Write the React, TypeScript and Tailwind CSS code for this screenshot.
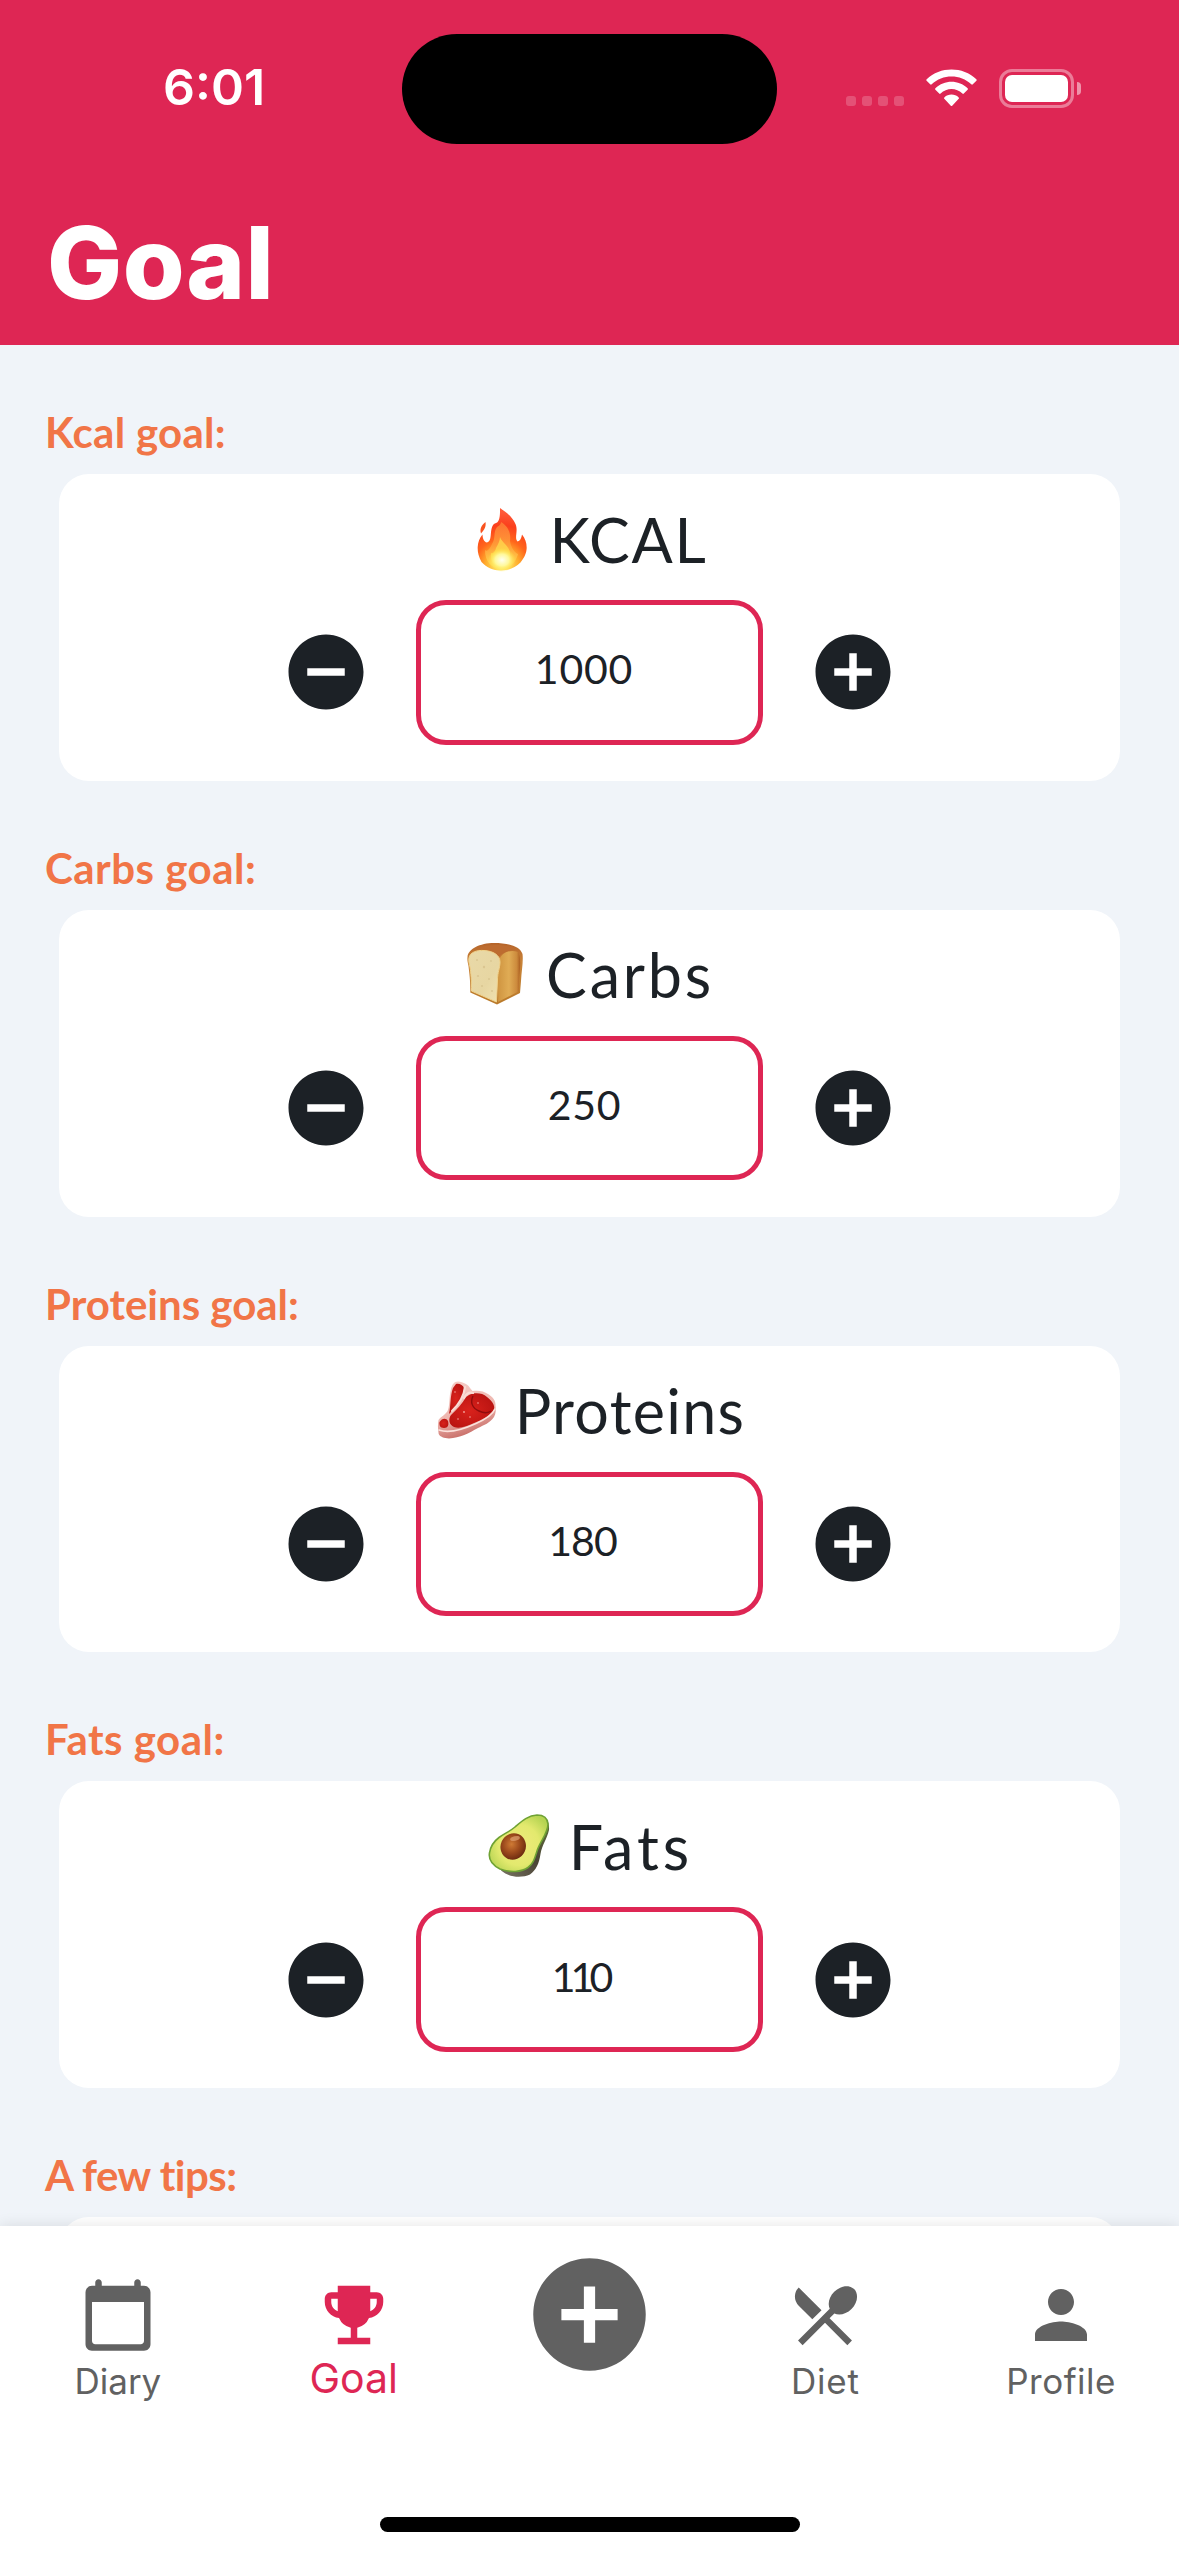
import type { ReactNode } from 'react';
import { MdAddCircle, MdEmojiEvents, MdPerson, MdRemoveCircle, MdRestaurantMenu } from 'react-icons/md';

function Flame() {
  return (
    <svg viewBox="0 0 66 66" className="size-[66px] shrink-0" aria-hidden="true">
      <defs>
        <radialGradient id="flameOuter" gradientUnits="userSpaceOnUse" cx="33" cy="60" r="54">
          <stop offset="0" stopColor="#fff27a" />
          <stop offset="0.3" stopColor="#ffb02e" />
          <stop offset="0.5" stopColor="#ff661c" />
          <stop offset="0.75" stopColor="#fb3f1c" />
          <stop offset="1" stopColor="#ff5a3a" />
        </radialGradient>
        <linearGradient id="flameMid" x1="0" y1="0" x2="0" y2="1">
          <stop offset="0" stopColor="#ff8238" />
          <stop offset="0.5" stopColor="#ffa03c" />
          <stop offset="1" stopColor="#ffe457" />
        </linearGradient>
        <radialGradient id="flameCore">
          <stop offset="0" stopColor="#fffff0" />
          <stop offset="0.5" stopColor="#fff89a" />
          <stop offset="1" stopColor="#ffe83c" stopOpacity="0" />
        </radialGradient>
      </defs>
      <path
        d="M31 2C36 5.500 43 10 46.500 18C49.500 25 45 32 48.500 35.500C51 35 52.500 32 53 28.500C56.500 33 58 38 57.600 43C57 49 54.500 52.500 51.500 56.500C46 62 39 64.500 32 64.500C24 64.500 17 61 12.500 56C9.500 50 8.500 46 8.700 41C9 36 10.500 32 13.500 28.500C13.500 32 15 36 18 36.500C24 35 20 24 24.500 18.500C27 16 31.500 19 31 2Z"
        fill="url(#flameOuter)"
      />
      <path d="M16.500 16C17.500 22 14 25 12 27.500C10.500 23 12.500 19 16.500 16Z" fill="#f9531f" />
      <path
        d="M32 16C40 21 42 28 41 35C42 42 46 47 49 48C47 56 41 62.500 32 62.500C22 62.500 16 55 16 44C18 46 21 43 23 38C27 32 24 26 28 21C31 19 32 18 32 16Z"
        fill="url(#flameMid)"
        opacity="0.8"
      />
      <path d="M31 31C33 37 41 40 41 48C41 57 38 61 32 61C25 61 21 55 22 47C24 48 26 46 27 42C29 38 31 35 31 31Z" fill="#ffdf50" opacity="0.7" />
      <ellipse cx="33" cy="54" rx="14" ry="12" fill="url(#flameCore)" />
    </svg>
  );
}

function Bread() {
  return (
    <svg viewBox="0 0 66 66" className="size-[66px] shrink-0" aria-hidden="true">
      <defs>
        <linearGradient id="crust" x1="0" y1="0" x2="0" y2="1">
          <stop offset="0" stopColor="#b5642a" />
          <stop offset="0.3" stopColor="#c98338" />
          <stop offset="1" stopColor="#b97a2a" />
        </linearGradient>
        <linearGradient id="breadSide" x1="0" y1="0" x2="1" y2="0">
          <stop offset="0" stopColor="#cf9440" />
          <stop offset="0.5" stopColor="#e0ac55" />
          <stop offset="0.85" stopColor="#cc8a3c" />
          <stop offset="1" stopColor="#aa5d20" />
        </linearGradient>
        <linearGradient id="crumb" x1="0" y1="0" x2="1" y2="1">
          <stop offset="0" stopColor="#e9d9a8" />
          <stop offset="0.6" stopColor="#e7d6a2" />
          <stop offset="1" stopColor="#f1e2b0" />
        </linearGradient>
      </defs>
      <path
        d="M5.500 16C6 8 18 2 32 2C46 2 58 5 60.500 13C61.500 20 59.500 30 59 40L58 52L35 63.500L8.300 51.500C8.500 40 7.500 34 6.500 25C5.500 21 5.200 19 5.500 16Z"
        fill="url(#crust)"
      />
      <path d="M37 20C39 11 49 8 56 11C60 17 57.500 30 57 40L56.500 50.500L36 61C37 48 34 38 37 28Z" fill="url(#breadSide)" />
      <path d="M14 8C23 2.500 46 2.500 54 8C47 9 40 12 37 16C31 10 23 8 14 8Z" fill="#bd6c30" />
      <path
        d="M7 17C8 11 15 9 22 9.500C31 10 38 14 38 21C38 27 35.500 31 35.500 39L34.500 61L9.500 50C9.500 40 9 32 8 26C7 22 6.500 20 7 17Z"
        fill="url(#crumb)"
        stroke="#f0d28c"
        strokeWidth="1"
      />
      <g fill="#d5c08a" opacity="0.7">
        <circle cx="15" cy="19" r="1" />
        <circle cx="22" cy="26" r="1.200" />
        <circle cx="29" cy="20" r="0.900" />
        <circle cx="16" cy="35" r="1.100" />
        <circle cx="27" cy="38" r="1" />
        <circle cx="20" cy="45" r="1" />
        <circle cx="30" cy="50" r="1" />
      </g>
    </svg>
  );
}

function Steak() {
  return (
    <svg viewBox="0 0 66 66" className="size-[66px] shrink-0" aria-hidden="true">
      <defs>
        <linearGradient id="fat" x1="0" y1="0" x2="0.300" y2="1">
          <stop offset="0" stopColor="#f6cfc8" />
          <stop offset="0.65" stopColor="#eeb5ae" />
          <stop offset="1" stopColor="#c9706a" />
        </linearGradient>
        <radialGradient id="meat" cx="0.450" cy="0.500" r="0.700">
          <stop offset="0" stopColor="#d9221c" />
          <stop offset="1" stopColor="#b3110f" />
        </radialGradient>
      </defs>
      <path
        d="M24 4.500C29 5 35 8 36 11L38.500 14C44 13 50 14 54 17C59 20 62 24 61.500 29C62 33 62 36 60 40C56 46 50 48 44 51C35 56 26 61 15 61.500C10 61 6 60 4.700 57C4 52 3.500 47 4.500 43C7 39 12 38 14 33C16 27 15 19 17 12C18 8 20 4.500 24 4.500Z"
        fill="url(#fat)"
      />
      <path d="M22 7C25 6 29 8 30 11C30 18 26 27 15 37C17 28 16 19 19 11Z" fill="url(#meat)" />
      <path d="M35 18C40 15.500 48 15.500 53 20C58 24 61 28 60 32C57 38 48 43 40 46C33 49 26 52 20 50C15 48 14 42 17 38C23 32 28 27 32 20Z" fill="url(#meat)" />
      <path d="M5.500 45C8 41 12 40.500 14 44C15 48 14 51 10 51C6 51 5 48 5.500 45Z" fill="url(#meat)" />
      <path d="M31 10C30 19 25 27 18 34M30 21C32 17 35 15 39 16" fill="none" stroke="#f9dcd5" strokeWidth="2.200" strokeLinecap="round" />
      <path d="M39 19C36 25 38 31 45 34C49 36 54 36 57 34" fill="none" stroke="#8f0d0d" strokeWidth="1.400" />
      <path d="M5 53C16 57 30 52 42 46.500C50 43 58 39 61 32" fill="none" stroke="#fbe2dc" strokeWidth="1.600" strokeLinecap="round" />
      <g fill="#f3a39b">
        <circle cx="21" cy="15" r="0.800" />
        <circle cx="30" cy="35" r="0.900" />
        <circle cx="24" cy="42" r="0.800" />
        <circle cx="44" cy="26" r="0.800" />
        <circle cx="36" cy="40" r="0.800" />
      </g>
    </svg>
  );
}

function Avocado() {
  return (
    <svg viewBox="0 0 66 66" className="size-[66px] shrink-0" aria-hidden="true">
      <defs>
        <linearGradient id="peel" x1="0.200" y1="1" x2="1" y2="0.200">
          <stop offset="0" stopColor="#6f6a5a" />
          <stop offset="0.500" stopColor="#4a4435" />
          <stop offset="1" stopColor="#5c6a3a" />
        </linearGradient>
        <radialGradient id="flesh" gradientUnits="userSpaceOnUse" cx="33" cy="32" r="34">
          <stop offset="0" stopColor="#f0ea7c" />
          <stop offset="0.600" stopColor="#e3e96e" />
          <stop offset="1" stopColor="#b6d452" />
        </radialGradient>
        <radialGradient id="pit" cx="0.400" cy="0.450" r="0.600">
          <stop offset="0" stopColor="#cf7a34" />
          <stop offset="0.550" stopColor="#9c4a1c" />
          <stop offset="1" stopColor="#6e2c10" />
        </radialGradient>
      </defs>
      <path d="M56 4C61 5 63.500 9 63 17C61 26 56 32 54.500 41C53 51 50 57 44 61.500C36 65 24 65 15 57.500Z" fill="url(#peel)" />
      <path
        d="M51 2C57 2 61.500 5 62 11C62 20 55 27 51.500 36.500C49 44 48 50 42 54.500C36 59 24 60 14 56C6 52 2.500 46 3.500 40C4.500 33 7 29 13 24.500C19 20 23 19 29 14C36 8 42 2.500 51 2Z"
        fill="url(#flesh)"
        stroke="#6fa234"
        strokeWidth="1.600"
      />
      <ellipse cx="27.200" cy="33.500" rx="12.600" ry="13.400" transform="rotate(25 27.200 33.500)" fill="url(#pit)" />
      <ellipse cx="29" cy="25.500" rx="5" ry="2.200" transform="rotate(-15 29 25.500)" fill="#e0a173" opacity="0.700" />
    </svg>
  );
}

function CalendarIcon() {
  return (
    <svg viewBox="0 0 24 24" className="size-[78px]" fill="currentColor" aria-hidden="true">
      <path
        fillRule="evenodd"
        d="M6 1c.55 0 1 .45 1 1v1h10V2c0-.55.45-1 1-1s1 .45 1 1v1h1c1.100 0 2 .9 2 2v16c0 1.100-.9 2-2 2H4c-1.100 0-2-.9-2-2V5c0-1.100.9-2 2-2h1V2c0-.55.45-1 1-1zM4 8v12c0 .55.45 1 1 1h14c.55 0 1-.45 1-1V8z"
      />
    </svg>
  );
}

function StatusBar() {
  return (
    <div className="relative flex h-[177px] items-center justify-between pr-[98px] pl-[163px]">
      <span className="-mt-1 font-[Inter] text-[50px] leading-[60px] font-semibold">6:01</span>
      <div className="absolute top-[33.5px] left-[402px] h-[110.500px] w-[375px] rounded-full bg-black" />
      <div className="-mt-px flex items-center">
        <div className="mt-[26px] mr-[22px] flex gap-1.5">
          {[0, 1, 2, 3].map((dot) => (
            <span key={dot} className="size-2.5 rounded-[3px] bg-white/20" />
          ))}
        </div>
        <svg viewBox="0 0 51 38" className="mr-[22px] h-[38px] w-[51px]" fill="white" aria-hidden="true">
          <path d="M.7 10.200C14 -2.700 37 -2.700 50.300 10.200c.6.600.6 1 .1 1.500l-3.600 3.600c-.5.500-1 .5-1.500 0C34.500 4.900 16.500 4.900 5.700 15.300c-.5.500-1 .5-1.500 0L.6 11.700c-.5-.5-.5-.9.100-1.500z" />
          <path d="M9.400 19.300c8.800-8.800 23.400-8.800 32.200 0 .5.500.5.900 0 1.400l-3.800 3.800c-.5.500-.9.500-1.400 0-6-6-15.800-6-21.800 0-.5.500-.9.500-1.400 0l-3.800-3.800c-.5-.5-.5-.9 0-1.400z" />
          <path d="M18.300 28.400c4-3.800 10.400-3.800 14.400 0 .5.500.5.900 0 1.400l-6.500 6.900c-.5.500-.9.500-1.400 0l-6.500-6.900c-.5-.5-.5-.9 0-1.400z" />
        </svg>
        <div className="h-[39px] w-[75px] rounded-[13px] border-[3px] border-white/40 p-[3px]">
          <div className="h-[27px] w-[63px] rounded-[7px] bg-white" />
        </div>
        <div className="ml-[3px] h-[13px] w-1 rounded-r-full bg-white/50" />
      </div>
    </div>
  );
}

type Goal = {
  label: string;
  labelClass: string;
  name: string;
  nameClass: string;
  value: string;
  valueClass: string;
  emoji: ReactNode;
};

const goals: Goal[] = [
  { label: 'Kcal goal:', labelClass: 'tracking-[0.3px]', name: 'KCAL', nameClass: 'ml-[15px] mr-[3px] tracking-[1.7px]', value: '1000', valueClass: 'mr-[11px] tracking-[0.8px]', emoji: <Flame /> },
  { label: 'Carbs goal:', labelClass: 'tracking-[0.5px]', name: 'Carbs', nameClass: 'ml-[18px] mr-[3px] tracking-[2.8px]', value: '250', valueClass: 'mr-[10px] tracking-[0.7px]', emoji: <Bread /> },
  { label: 'Proteins goal:', labelClass: 'tracking-[0px]', name: 'Proteins', nameClass: 'ml-[15px] tracking-[1.3px]', value: '180', valueClass: 'mr-[14px] tracking-[-1px]', emoji: <Steak /> },
  { label: 'Fats goal:', labelClass: 'tracking-[0.5px]', name: 'Fats', nameClass: 'ml-[17px] tracking-[4px]', value: '110', valueClass: 'mr-[19px] tracking-[-5px]', emoji: <Avocado /> },
];

function SectionLabel({ className, children }: { className: string; children: ReactNode }) {
  return (
    <h2 className="h-[129px] pt-[62px] pl-[45px] font-[Lato] text-[42px] leading-[50px] font-bold text-[#f17547]">
      <span className={className}>{children}</span>
    </h2>
  );
}

function GoalSection({ goal }: { goal: Goal }) {
  return (
    <section>
      <SectionLabel className={goal.labelClass}>{goal.label}</SectionLabel>
      <div className="mx-[59px] h-[306.750px] rounded-[30px] bg-white text-[#1c2126]">
        <div className="flex h-[126px] justify-center pt-[31.500px]">
          {goal.emoji}
          <span className={`pt-px font-[Lato] text-[61px] leading-[66px] ${goal.nameClass}`}>{goal.name}</span>
        </div>
        <div className="flex items-center justify-center gap-[45px]">
          <MdRemoveCircle className="size-[90px]" />
          <div className="flex h-[144.500px] w-[347px] items-center justify-center rounded-[30px] border-[5px] border-[#de2654] pb-1.5 font-[Lato] text-[41px] leading-[50px]">
            <span className={goal.valueClass}>{goal.value}</span>
          </div>
          <MdAddCircle className="size-[90px]" />
        </div>
      </div>
    </section>
  );
}

function TabBar() {
  return (
    <nav className="absolute inset-x-0 bottom-0 h-[330px] bg-white font-[Inter] text-[35px] leading-[44px] text-[#616161] shadow-[0_0_14px_rgba(0,0,0,0.11)]">
      <div className="grid grid-cols-5 pt-[50px]">
        <div className="flex flex-col items-center">
          <CalendarIcon />
          <span className="mt-[5px]">Diary</span>
        </div>
        <div className="flex flex-col items-center text-[#de2654]">
          <MdEmojiEvents className="size-[78px]" />
          <span className="mt-0.5 text-[41px]">Goal</span>
        </div>
        <div className="-mt-[29px] flex justify-center">
          <MdAddCircle className="size-[135px]" />
        </div>
        <div className="flex flex-col items-center">
          <MdRestaurantMenu className="size-[78px]" />
          <span className="mt-[5px] tracking-[0.8px]">Diet</span>
        </div>
        <div className="flex flex-col items-center">
          <MdPerson className="size-[78px]" />
          <span className="mt-[5px] tracking-[0.5px]">Profile</span>
        </div>
      </div>
      <div className="absolute bottom-6 left-[380px] h-[15px] w-[420px] rounded-full bg-black" />
    </nav>
  );
}

export default function App() {
  return (
    <div className="relative h-[2556px] w-[1179px] overflow-hidden bg-[#f0f4f9]">
      <header className="h-[345px] bg-[#de2654] text-white">
        <StatusBar />
        <h1 className="pt-[26px] pl-[47px] font-[Inter] text-[100px] leading-[120px] font-extrabold tracking-[0.5px]">Goal</h1>
      </header>
      <main>
        {goals.map((goal) => (
          <GoalSection key={goal.name} goal={goal} />
        ))}
        <SectionLabel className="tracking-[-0.5px]">A few tips:</SectionLabel>
        <div className="mx-[59px] h-[307px] rounded-[30px] bg-white" />
      </main>
      <TabBar />
    </div>
  );
}
